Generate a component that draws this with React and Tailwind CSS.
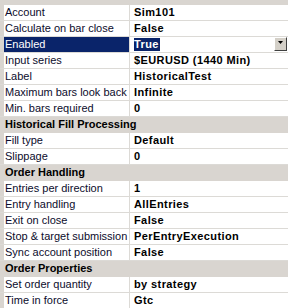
import React from 'react'

const rows = [
  { head: 'General' },
  { name: 'Account', value: 'Sim101' },
  { name: 'Calculate on bar close', value: 'False' },
  { name: 'Enabled', value: 'True', selected: true },
  { name: 'Input series', value: '$EURUSD (1440 Min)' },
  { name: 'Label', value: 'HistoricalTest' },
  { name: 'Maximum bars look back', value: 'Infinite' },
  { name: 'Min. bars required', value: '0' },
  { head: 'Historical Fill Processing' },
  { name: 'Fill type', value: 'Default' },
  { name: 'Slippage', value: '0' },
  { head: 'Order Handling' },
  { name: 'Entries per direction', value: '1' },
  { name: 'Entry handling', value: 'AllEntries' },
  { name: 'Exit on close', value: 'False' },
  { name: 'Stop & target submission', value: 'PerEntryExecution' },
  { name: 'Sync account position', value: 'False' },
  { head: 'Order Properties' },
  { name: 'Set order quantity', value: 'by strategy' },
  { name: 'Time in force', value: 'Gtc' },
]

function DropButton() {
  return (
    <div className="ml-auto mr-[1px] mt-[0px] w-[13px] h-[14px] bg-[#d4d0c8] border-t border-l border-t-white border-l-white border-b border-r border-b-[#404040] border-r-[#404040] flex justify-center pt-[3px]">
      <svg width="5" height="3" viewBox="0 0 5 3">
        <path d="M0 0h5L2.5 3z" fill="#000" />
      </svg>
    </div>
  )
}

export default function App() {
  return (
    <div className="w-[288px] h-[308px] overflow-hidden bg-white text-[11px] text-black" style={{ fontFamily: '"Liberation Sans", Arial, sans-serif' }}>
      <div className="-mt-[11px]">
        {rows.map((r, i) =>
          r.head ? (
            <div key={i} className="h-[16px] bg-[#d9d5d0] border-b border-[#d9d5d0] pl-[5px] font-bold leading-[15px] whitespace-nowrap">
              {r.head}
            </div>
          ) : (
            <div key={i} className="flex h-[16px] border-b border-[#dcdad6]">
              <div className="w-[4px] bg-[#d9d5d0] shrink-0" />
              <div className={`w-[125px] shrink-0 pl-[1px] leading-[15px] whitespace-nowrap ${r.selected ? 'bg-[#0a246a] text-white' : 'text-[#0c0c2c]'}`}>
                {r.name}
              </div>
              <div className="w-[1px] bg-[#dcdad6] shrink-0" />
              <div className="flex-1 flex items-start pl-[4px] font-bold tracking-[0.4px] leading-[15px] whitespace-nowrap">
                {r.selected ? (
                  <>
                    <span className="mt-[1px] bg-[#0a246a] text-white leading-[13px] pr-[1px]">{r.value}</span>
                    <DropButton />
                  </>
                ) : (
                  r.value
                )}
              </div>
            </div>
          )
        )}
      </div>
    </div>
  )
}
